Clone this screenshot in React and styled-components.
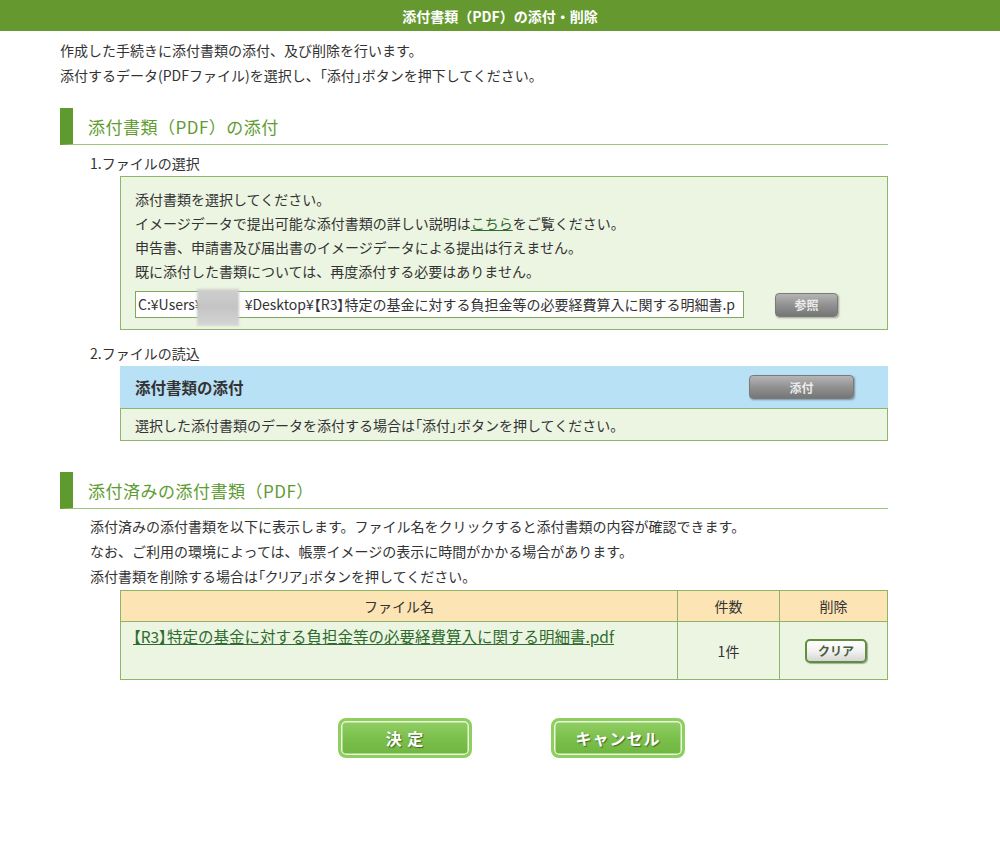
import React from 'react';
import styled, { createGlobalStyle } from 'styled-components';

const GlobalStyle = createGlobalStyle`
  body {
    margin: 0;
    background: #fff;
    font-family: "Noto Sans CJK JP", "Noto Sans", sans-serif;
    color: #333;
    font-size: 14px;
  }
`;

const TopBar = styled.div`
  height: 31px;
  background: #65992f;
  color: #fff;
  font-size: 14px;
  font-weight: bold;
  display: flex;
  align-items: center;
  justify-content: center;
`;

const Content = styled.div`
  width: 828px;
  padding: 7px 0 0 60px;
`;

const Para = styled.p`
  margin: ${(p) => p.top || 0}px 0 0;
  line-height: 25px;
  padding-left: ${(p) => p.indent || 0}px;
`;

const Tight = styled.span`
  font-feature-settings: "palt";
`;

const Heading = styled.h2`
  margin: ${(p) => p.top}px 0 0;
  height: 36px;
  display: flex;
  align-items: center;
  border-left: 13px solid #5f9a2f;
  border-bottom: 1px solid #9cc97a;
  padding-left: 15px;
  font-size: 17px;
  font-weight: normal;
  color: #5e9c32;
  letter-spacing: 0.5px;
`;

const StepLabel = styled.div`
  margin-top: ${(p) => p.top}px;
  padding-left: 30px;
  line-height: 20px;
`;

const GreenBox = styled.div`
  margin: 3px 0 0 60px;
  background: #ecf5e2;
  border: 1px solid #8db46a;
  padding: 10px 14px 11px;
`;

const Line = styled.div`
  line-height: 24px;
`;

const Link = styled.a`
  color: #2f6b2f;
  text-decoration: underline;
  cursor: pointer;
  font-size: ${(p) => p.size || 'inherit'};
`;

const FileRow = styled.div`
  display: flex;
  align-items: center;
  margin-top: 8px;
`;

const FileField = styled.div`
  position: relative;
  width: 605px;
  height: 25px;
  border: 1px solid #7ea85b;
  background: #fff;
  font-size: 14px;
  line-height: 25px;
  padding-left: 2px;
  white-space: nowrap;
`;

const Clip = styled.div`
  overflow: hidden;
  width: 603px;
`;

const Blur = styled.span`
  position: absolute;
  left: 61px;
  top: -3px;
  width: 42px;
  height: 37px;
  background: linear-gradient(#cfcfcf, #c4c4c4 50%, #d6d6d6);
  filter: blur(1px);
`;

const GrayButton = styled.button`
  width: ${(p) => p.w}px;
  height: 24px;
  margin-left: ${(p) => p.ml || 0}px;
  border: 1px solid #7a7a7a;
  border-radius: 4px;
  background: linear-gradient(#b5b5b5, #8e8e8e 55%, #767676);
  box-shadow: 1px 1px 2px rgba(0, 0, 0, 0.35);
  color: #ececec;
  font-family: inherit;
  font-size: 12px;
  font-weight: bold;
  padding: 0;
`;

const BluePanel = styled.div`
  margin: 3px 0 0 60px;
  height: 42px;
  background: #b9e1f6;
  display: flex;
  align-items: center;
  justify-content: space-between;
  padding: 0 34px 0 15px;
  font-size: 15.5px;
  font-weight: bold;
`;

const NoteRow = styled.div`
  margin-left: 60px;
  height: 31px;
  background: #ecf5e2;
  border: 1px solid #8db46a;
  display: flex;
  align-items: center;
  padding-left: 14px;
`;

const Table = styled.table`
  margin: 1px 0 0 60px;
  width: 768px;
  border-collapse: collapse;
`;

const Th = styled.th`
  height: 30px;
  padding: 0;
  background: #fde4b4;
  border: 1px solid #8db46a;
  font-weight: normal;
  width: ${(p) => (p.w ? `${p.w}px` : 'auto')};
  text-align: center;
`;

const Td = styled.td`
  height: 58px;
  background: #ecf5e2;
  border: 1px solid #8db46a;
  text-align: ${(p) => p.align || 'center'};
  vertical-align: ${(p) => p.valign || 'middle'};
  padding: ${(p) => p.pad || 0};
  box-sizing: border-box;
`;

const ClearButton = styled.button`
  width: 62px;
  height: 24px;
  margin-left: 5px;
  border: 2px solid #5f8f3a;
  border-radius: 5px;
  background: linear-gradient(#ffffff, #f2f2f2 50%, #d6d6d6);
  box-shadow: 1px 1px 1px rgba(0, 0, 0, 0.3);
  color: #4b5e3b;
  font-family: inherit;
  font-size: 12px;
  font-weight: bold;
  padding: 0;
`;

const ActionRow = styled.div`
  display: flex;
  gap: 79px;
  margin-top: 38px;
  padding-left: 338px;
`;

const ActionButton = styled.button`
  width: 134px;
  height: 40px;
  border: 3px solid #8fcf60;
  border-radius: 8px;
  background: linear-gradient(#92cf66, #7cc04c 50%, #6fb540);
  box-shadow: inset 0 0 0 1.5px #e9f7dc;
  color: #fff;
  font-family: inherit;
  font-size: 16px;
  font-weight: bold;
  letter-spacing: 1px;
  text-shadow: 1px 1px 1px rgba(40, 70, 20, 0.7);
  padding: 0;
`;

export default function App() {
  return (
    <>
      <GlobalStyle />
      <TopBar>添付書類（PDF）の添付・削除</TopBar>
      <Content>
        <Para>作成した手続きに添付書類の添付、及び削除を行います。</Para>
        <Para>
          添付するデータ(PDFファイル)を選択し、<Tight>「添付」</Tight>ボタンを押下してください。
        </Para>

        <Heading top={20}>添付書類（PDF）の添付</Heading>
        <StepLabel top={8}>1.ファイルの選択</StepLabel>
        <GreenBox>
          <Line>添付書類を選択してください。</Line>
          <Line>
            イメージデータで提出可能な添付書類の詳しい説明は<Link>こちら</Link>をご覧ください。
          </Line>
          <Line>申告書、申請書及び届出書のイメージデータによる提出は行えません。</Line>
          <Line>既に添付した書類については、再度添付する必要はありません。</Line>
          <FileRow>
            <FileField>
              <Clip>
                C:¥Users¥　　　¥Desktop¥<Tight>【R3】</Tight>特定の基金に対する負担金等の必要経費算入に関する明細書.p
              </Clip>
              <Blur />
            </FileField>
            <GrayButton w={63} ml={31}>参照</GrayButton>
          </FileRow>
        </GreenBox>

        <StepLabel top={13}>2.ファイルの読込</StepLabel>
        <BluePanel>
          <span>添付書類の添付</span>
          <GrayButton w={105}>添付</GrayButton>
        </BluePanel>
        <NoteRow>
          <span>
            選択した添付書類のデータを添付する場合は<Tight>「添付」</Tight>ボタンを押してください。
          </span>
        </NoteRow>

        <Heading top={31}>添付済みの添付書類（PDF）</Heading>
        <Para indent={30} top={5}>
          添付済みの添付書類を以下に表示します。ファイル名をクリックすると添付書類の内容が確認できます。
        </Para>
        <Para indent={30}>なお、ご利用の環境によっては、帳票イメージの表示に時間がかかる場合があります。</Para>
        <Para indent={30}>
          添付書類を削除する場合は<Tight>「クリア」</Tight>ボタンを押してください。
        </Para>

        <Table>
          <thead>
            <tr>
              <Th>ファイル名</Th>
              <Th w={101}>件数</Th>
              <Th w={107}>削除</Th>
            </tr>
          </thead>
          <tbody>
            <tr>
              <Td align="left" valign="top" pad="3px 0 0 12px">
                <Link size="15.5px">
                  <Tight>【R3】</Tight>特定の基金に対する負担金等の必要経費算入に関する明細書.pdf
                </Link>
              </Td>
              <Td>1件</Td>
              <Td>
                <ClearButton>クリア</ClearButton>
              </Td>
            </tr>
          </tbody>
        </Table>
      </Content>

      <ActionRow>
        <ActionButton>決 定</ActionButton>
        <ActionButton>キャンセル</ActionButton>
      </ActionRow>
    </>
  );
}
